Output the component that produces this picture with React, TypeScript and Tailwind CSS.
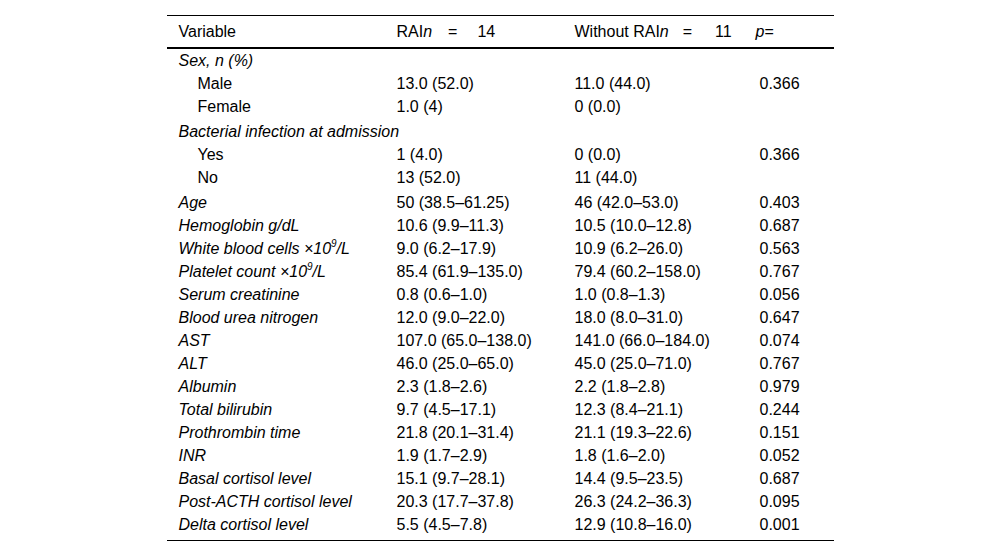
import React from "react";

type Row = {
  label: React.ReactNode;
  rai?: string;
  without?: string;
  p?: string;
  kind: "group" | "sub" | "var";
  gapBefore?: boolean;
};

const x109 = (name: string) => (
  <>
    {name} ×10<sup className="relative -top-[1px] align-super text-[10px] leading-none">9</sup>/L
  </>
);

const rows: Row[] = [
  { label: "Sex, n (%)", kind: "group" },
  { label: "Male", rai: "13.0 (52.0)", without: "11.0 (44.0)", p: "0.366", kind: "sub" },
  { label: "Female", rai: "1.0 (4)", without: "0 (0.0)", kind: "sub" },
  { label: "Bacterial infection at admission", kind: "group", gapBefore: true },
  { label: "Yes", rai: "1 (4.0)", without: "0 (0.0)", p: "0.366", kind: "sub" },
  { label: "No", rai: "13 (52.0)", without: "11 (44.0)", kind: "sub" },
  { label: "Age", rai: "50 (38.5–61.25)", without: "46 (42.0–53.0)", p: "0.403", kind: "var", gapBefore: true },
  { label: "Hemoglobin g/dL", rai: "10.6 (9.9–11.3)", without: "10.5 (10.0–12.8)", p: "0.687", kind: "var" },
  { label: x109("White blood cells"), rai: "9.0 (6.2–17.9)", without: "10.9 (6.2–26.0)", p: "0.563", kind: "var" },
  { label: x109("Platelet count"), rai: "85.4 (61.9–135.0)", without: "79.4 (60.2–158.0)", p: "0.767", kind: "var" },
  { label: "Serum creatinine", rai: "0.8 (0.6–1.0)", without: "1.0 (0.8–1.3)", p: "0.056", kind: "var" },
  { label: "Blood urea nitrogen", rai: "12.0 (9.0–22.0)", without: "18.0 (8.0–31.0)", p: "0.647", kind: "var" },
  { label: "AST", rai: "107.0 (65.0–138.0)", without: "141.0 (66.0–184.0)", p: "0.074", kind: "var" },
  { label: "ALT", rai: "46.0 (25.0–65.0)", without: "45.0 (25.0–71.0)", p: "0.767", kind: "var" },
  { label: "Albumin", rai: "2.3 (1.8–2.6)", without: "2.2 (1.8–2.8)", p: "0.979", kind: "var" },
  { label: "Total bilirubin", rai: "9.7 (4.5–17.1)", without: "12.3 (8.4–21.1)", p: "0.244", kind: "var" },
  { label: "Prothrombin time", rai: "21.8 (20.1–31.4)", without: "21.1 (19.3–22.6)", p: "0.151", kind: "var" },
  { label: "INR", rai: "1.9 (1.7–2.9)", without: "1.8 (1.6–2.0)", p: "0.052", kind: "var" },
  { label: "Basal cortisol level", rai: "15.1 (9.7–28.1)", without: "14.4 (9.5–23.5)", p: "0.687", kind: "var" },
  { label: "Post-ACTH cortisol level", rai: "20.3 (17.7–37.8)", without: "26.3 (24.2–36.3)", p: "0.095", kind: "var" },
  { label: "Delta cortisol level", rai: "5.5 (4.5–7.8)", without: "12.9 (10.8–16.0)", p: "0.001", kind: "var" },
];

const cols = "grid grid-cols-[218px_178px_185px_1fr]";

export default function App() {
  return (
    <div className="min-h-[557px] bg-white pt-[15px] text-[16px] text-black" style={{ fontFamily: '"Liberation Sans", Arial, sans-serif' }}>
      <div className="mx-auto w-[667px] border-t border-black">
        <div className={`${cols} h-[33px] items-center border-b-2 border-black leading-none`}>
          <div className="pl-3">Variable</div>
          <div className="pl-3">
            RAI<i>n</i>
            <span className="ml-4 mr-5">=</span>14
          </div>
          <div className="pl-3">
            Without RAI<i>n</i>
            <span className="ml-[14px] mr-[23px]">=</span>11
          </div>
          <div className="pl-2">
            <i>p</i>=
          </div>
        </div>

        <div className="pb-[4px]">
          {rows.map((r, i) => (
            <div key={i} className={`${cols} h-[23px] items-center leading-none ${r.gapBefore ? "mt-[2px]" : ""}`}>
              {r.kind === "group" ? (
                <div className="col-span-4 pl-3 italic">{r.label}</div>
              ) : (
                <>
                  <div className={r.kind === "sub" ? "pl-[31px]" : "pl-3 italic"}>{r.label}</div>
                  <div className="pl-3">{r.rai}</div>
                  <div className="pl-3">{r.without}</div>
                  <div className="pl-3">{r.p}</div>
                </>
              )}
            </div>
          ))}
        </div>
        <div className="border-t border-black" />
      </div>
    </div>
  );
}
